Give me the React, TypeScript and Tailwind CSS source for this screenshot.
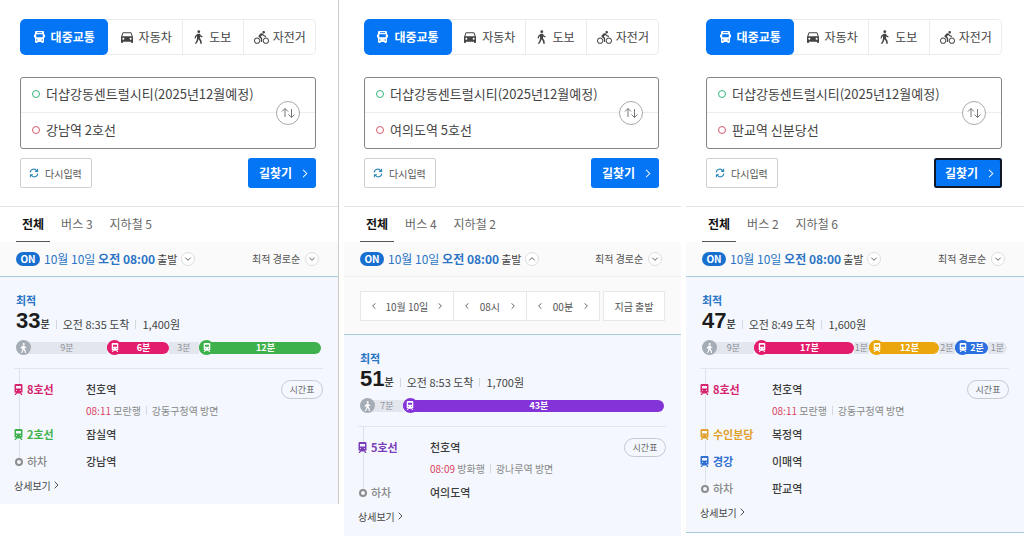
import React, { useState } from "react";
import clsx from "clsx";
import { MdDirectionsBike, MdDirectionsCar } from "react-icons/md";

type Segment = { minutes: string; size: number; color?: string; icon?: "walk" | "train" };
type Step = { line: string; color: string; station: string; time?: string; bound?: string; toward?: string };
type Route = {
  id: string;
  to: string;
  bus: number;
  subway: number;
  pickerOpen?: boolean;
  focused?: boolean;
  total: string;
  arrival: string;
  fare: string;
  segments: Segment[];
  steps: Step[];
  exit: string;
  className: string;
  resultClassName: string;
};

const FROM = "더샵강동센트럴시티(2025년12월예정)";

const PINK = "#e31c6e";
const GREEN = "#3fb14c";
const PURPLE = "#8433d9";
const YELLOW = "#eaa60c";
const BLUE = "#2b6fe0";

const routes: Route[] = [
  {
    id: "gangnam",
    to: "강남역 2호선",
    bus: 3,
    subway: 5,
    total: "33",
    arrival: "오전 8:35 도착",
    fare: "1,400원",
    segments: [
      { minutes: "9분", size: 91, icon: "walk" },
      { minutes: "6분", size: 62, icon: "train", color: PINK },
      { minutes: "3분", size: 30 },
      { minutes: "12분", size: 122, icon: "train", color: GREEN },
    ],
    steps: [
      { line: "8호선", color: "#d6246e", station: "천호역", time: "08:11", bound: "모란행", toward: "강동구청역 방면" },
      { line: "2호선", color: GREEN, station: "잠실역" },
    ],
    exit: "강남역",
    className: "self-start border-r border-[#cfccc6]",
    resultClassName: "pb-[9px]",
  },
  {
    id: "yeouido",
    to: "여의도역 5호선",
    bus: 4,
    subway: 2,
    pickerOpen: true,
    total: "51",
    arrival: "오전 8:53 도착",
    fare: "1,700원",
    segments: [
      { minutes: "7분", size: 43, icon: "walk" },
      { minutes: "43분", size: 263, icon: "train", color: PURPLE },
    ],
    steps: [{ line: "5호선", color: "#7b3cb8", station: "천호역", time: "08:09", bound: "방화행", toward: "광나루역 방면" }],
    exit: "여의도역",
    className: "",
    resultClassName: "grow pb-[9px]",
  },
  {
    id: "pangyo",
    to: "판교역 신분당선",
    bus: 2,
    subway: 6,
    focused: true,
    total: "47",
    arrival: "오전 8:49 도착",
    fare: "1,600원",
    segments: [
      { minutes: "9분", size: 52, icon: "walk" },
      { minutes: "17분", size: 100, icon: "train", color: PINK },
      { minutes: "1분", size: 15 },
      { minutes: "12분", size: 70, icon: "train", color: YELLOW },
      { minutes: "2분", size: 16 },
      { minutes: "2분", size: 33, icon: "train", color: BLUE },
      { minutes: "1분", size: 19 },
    ],
    steps: [
      { line: "8호선", color: "#d6246e", station: "천호역", time: "08:11", bound: "모란행", toward: "강동구청역 방면" },
      { line: "수인분당", color: "#e2a02c", station: "복정역" },
      { line: "경강", color: "#2f6fd0", station: "이매역" },
    ],
    exit: "판교역",
    className: "self-start",
    resultClassName: "border-b pb-[10px]",
  },
];

function BusIcon() {
  return (
    <svg viewBox="0 0 22 24" className="h-3 w-[11px]" fill="currentColor" aria-hidden="true">
      <path
        fillRule="evenodd"
        d="M4 0h14a2 2 0 0 1 2 2v5h2v6h-2v9h-1v2h-4v-2H7v2H3v-2H2v-9H0V7h2V2a2 2 0 0 1 2-2Zm2 2.500V4h10V2.500H6ZM4.500 6.500v6h13v-6h-13ZM4 17v2h3v-2H4Zm11 0v2h3v-2h-3Z"
      />
    </svg>
  );
}

function TrainIcon({ className }: { className?: string }) {
  return (
    <svg viewBox="0 0 18 22" className={className} fill="currentColor" aria-hidden="true">
      <path
        fillRule="evenodd"
        d="M3.500 0h11A2.500 2.500 0 0 1 17 2.500V17h-3l3 5h-3l-1.500-3h-7L4 22H1l3-5H1V2.500A2.500 2.500 0 0 1 3.500 0ZM4 4v5h10V4H4ZM4 12.500V14h2v-1.500H4Zm8 0V14h2v-1.500h-2Z"
      />
    </svg>
  );
}

function WalkIcon({ className }: { className?: string }) {
  return (
    <svg viewBox="0 0 16 24" className={className} fill="currentColor" aria-hidden="true">
      <circle cx="8.500" cy="2.500" r="2.500" />
      <path d="M6.500 6h4l1.800 3.200 3 1.600-.9 1.900-3.600-1.700v3.500l2.400 3.700L14 24h-2.700l-.9-4.700L8 16l-1.200 4L4 24H1.300l3-5 1-4.500V10.500L3.700 11.500 3 14.500H1l.8-4.300Z" />
    </svg>
  );
}

function Chevron({ dir, className }: { dir: "up" | "down" | "left" | "right"; className?: string }) {
  const paths = {
    up: "M2 8l4-4 4 4",
    down: "M2 4l4 4 4-4",
    left: "M8 2L4 6l4 4",
    right: "M4 1l5 5-5 5",
  };
  return (
    <svg viewBox="0 0 12 12" className={className} fill="none" stroke="currentColor" strokeWidth="1.400" aria-hidden="true">
      <path d={paths[dir]} />
    </svg>
  );
}

function ModeTabs() {
  const item = "flex items-center justify-center gap-1 text-[#444]";
  return (
    <div className="flex h-9 overflow-hidden rounded-[5px] bg-white text-xs shadow-[inset_0_0_0_1px_#ebebeb]">
      <button type="button" className="flex flex-[89] items-center justify-center gap-[6px] rounded-[5px] bg-[#0475f4] font-bold text-white">
        <BusIcon />
        대중교통
      </button>
      <button type="button" className={clsx(item, "flex-[74]")}>
        <MdDirectionsCar className="size-4" />
        자동차
      </button>
      <button type="button" className={clsx(item, "flex-[60] gap-[6px] border-l border-[#ebebeb]")}>
        <WalkIcon className="h-[14px] w-[9px]" />
        도보
      </button>
      <button type="button" className={clsx(item, "flex-[73] border-l border-[#ebebeb]")}>
        <MdDirectionsBike className="size-[15px]" />
        자전거
      </button>
    </div>
  );
}

function SearchForm({ route }: { route: Route }) {
  const row = "flex h-[35px] items-center gap-[6px] pb-[2px] pl-[11px]";
  return (
    <form className="border-b border-[#e4e4e4] pb-[18px] pl-5 pr-[22px] pt-[19px]" onSubmit={(e) => e.preventDefault()}>
      <ModeTabs />

      <div className="relative mt-[22px] rounded-[3px] border border-[#858585] text-[13px] text-[#444]">
        <div className={clsx(row, "border-b border-[#ececec]")}>
          <span className="size-2 shrink-0 rounded-full border border-[#2fb67c]" />
          <input aria-label="출발지" defaultValue={FROM} className="min-w-0 grow bg-transparent outline-none" />
        </div>
        <div className={row}>
          <span className="size-2 shrink-0 rounded-full border border-[#d4596c]" />
          <input aria-label="도착지" defaultValue={route.to} className="min-w-0 grow bg-transparent outline-none" />
        </div>
        <button
          type="button"
          aria-label="출발지와 도착지 바꾸기"
          className="absolute right-[15px] top-1/2 flex size-6 -translate-y-1/2 items-center justify-center rounded-full border border-[#a9a9a9] bg-white text-[#777]"
        >
          <svg viewBox="0 0 14 12" className="h-3 w-[14px]" fill="none" stroke="currentColor" aria-hidden="true">
            <path d="M4 10V1.500M1 4.500l3-3 3 3M10.500 2v8.500M7.500 7.500l3 3 3-3" />
          </svg>
        </button>
      </div>

      <div className="mt-[9px] flex justify-between">
        <button type="button" className="flex h-[30px] items-center gap-[6px] rounded-[2px] border border-[#cfcfcf] pl-2 pr-[9px] text-[10px] text-[#555]">
          <svg viewBox="0 0 12 12" className="size-[10px]" fill="none" stroke="#2d86b8" strokeWidth="1.300" aria-hidden="true">
            <path d="M1.500 5.500A4.300 4.300 0 0 1 9.500 3.500M10.500 6.500A4.300 4.300 0 0 1 2.500 8.500M10.300 1v3H7.300M1.700 11V8h3" />
          </svg>
          다시입력
        </button>
        <button
          type="submit"
          className={clsx(
            "flex h-[30px] items-center gap-2 rounded-[3px] bg-[#0475f4] pl-[11px] pr-[7px] text-xs font-bold text-white",
            route.focused && "shadow-[inset_0_0_0_2px_#101828]",
          )}
        >
          길찾기
          <Chevron dir="right" className="size-[9px]" />
        </button>
      </div>
    </form>
  );
}

function RoundChevron({ dir, className }: { dir: "up" | "down"; className?: string }) {
  return (
    <span className={clsx("flex size-[14px] items-center justify-center rounded-full border border-[#dedede] bg-white text-[#555]", className)}>
      <Chevron dir={dir} className="size-2" />
    </span>
  );
}

function Stepper({ label, className }: { label: string; className?: string }) {
  return (
    <div className={clsx("flex items-center justify-between px-[9px]", className)}>
      <button type="button" aria-label={`${label} 이전`}>
        <Chevron dir="left" className="size-2" />
      </button>
      {label}
      <button type="button" aria-label={`${label} 다음`}>
        <Chevron dir="left" className="size-2 rotate-180" />
      </button>
    </div>
  );
}

function TimePicker() {
  return (
    <div className="flex gap-[3px] border-t border-[#f0f0f0] bg-[#fafafa] px-4 pb-[13px] pt-[14px] text-[10px] text-[#555]">
      <div className="grid h-[30px] flex-[242] grid-cols-[93fr_74fr_74fr] border border-[#e8e8e8] bg-white">
        <Stepper label="10월 10일" />
        <Stepper label="08시" className="border-l border-[#e8e8e8]" />
        <Stepper label="00분" className="border-l border-[#e8e8e8]" />
      </div>
      <button type="button" className="h-[30px] flex-[61] border border-[#e8e8e8] bg-white">
        지금 출발
      </button>
    </div>
  );
}

function SegmentBar({ segments }: { segments: Segment[] }) {
  return (
    <div className="mt-[7px] flex h-[15px] items-center">
      {segments.map((s, i) => (
        <div
          key={i}
          className={clsx(
            "flex h-3 min-w-0 basis-0 items-center text-[9px] leading-3",
            s.color ? "z-10 rounded-full font-bold text-white" : "bg-[#e3e6ed] text-[#8a8f98]",
            i === 0 && "rounded-l-full",
            i === segments.length - 1 && "rounded-r-full",
          )}
          style={{ flexGrow: s.size, backgroundColor: s.color }}
        >
          {s.icon && (
            <span
              className={clsx("flex size-[15px] shrink-0 items-center justify-center rounded-full text-white", !s.color && "bg-[#a4acb5]")}
              style={{ backgroundColor: s.color }}
            >
              {s.icon === "walk" ? <WalkIcon className="h-[10px] w-[7px]" /> : <TrainIcon className="h-[9px] w-2" />}
            </span>
          )}
          <span className={clsx("flex min-w-0 grow justify-center whitespace-nowrap", s.icon && "pr-1")}>{s.minutes}</span>
        </div>
      ))}
    </div>
  );
}

function Bar() {
  return <span className="h-[9px] w-px bg-[#d3d8df]" />;
}

function RouteResult({ route }: { route: Route }) {
  return (
    <section className={clsx("border-t border-[#a6cbdf] bg-[#f4f8fe] pt-[15px]", route.resultClassName)}>
      <div className="pl-4 pr-[17px]">
        <p className="text-[11px] font-bold leading-4 text-[#2a74c4]">최적</p>
        <div className="flex h-[25px] items-center text-[11px] text-[#444]">
          <strong className="font-['Liberation_Sans',sans-serif] text-[22px] leading-[25px] text-[#1c1c1c]">{route.total}</strong>
          <span className="mt-[7px] flex items-center gap-[6px] leading-4">
            <span className="text-[10px] font-bold text-[#444]">분</span>
            <Bar />
            {route.arrival}
            <Bar />
            {route.fare}
          </span>
        </div>
        <SegmentBar segments={route.segments} />
      </div>

      <div className="ml-[14px] mr-[15px] mt-[13px] border-t border-[#dfe6ef] text-[11px] text-[#3c3c3c]">
        <ol className="relative pt-[10px] before:absolute before:bottom-[14px] before:left-[5px] before:top-0 before:w-px before:bg-[#dbe2ea]">
          {route.steps.map((s) => (
            <li key={s.line}>
              <div className={clsx("flex items-center", s.time ? "h-[21px]" : "h-[27px]")}>
                <div className="relative flex w-[72px] items-center gap-1 font-bold" style={{ color: s.color }}>
                  <TrainIcon className="h-[11px] w-[9px] bg-[#f4f8fe]" />
                  <span className="whitespace-nowrap">{s.line}</span>
                </div>
                <span className="grow font-medium">{s.station}</span>
                {s.time && (
                  <button type="button" className="h-[19px] w-[42px] rounded-full border border-[#c6cad0] text-[9px] text-[#666]">
                    시간표
                  </button>
                )}
              </div>
              {s.time && (
                <div className="mb-px flex h-5 items-center gap-[5px] pl-[72px] text-[10px] text-[#888]">
                  <span>
                    <span className="text-[#dc3f62]">{s.time}</span> {s.bound}
                  </span>
                  <Bar />
                  {s.toward}
                </div>
              )}
            </li>
          ))}
          <li className="flex h-[27px] items-center font-medium">
            <div className="relative flex w-[72px] items-center gap-1 text-[#888]">
              <span className="ml-px size-2 rounded-full border-2 border-[#8d8d8d] bg-[#f4f8fe]" />
              하차
            </div>
            {route.exit}
          </li>
        </ol>
        <a href={`#${route.id}`} className="flex h-5 items-center gap-px text-[10px] text-[#444]">
          상세보기
          <Chevron dir="right" className="size-2" />
        </a>
      </div>
    </section>
  );
}

function RoutePanel({ route }: { route: Route }) {
  const [open, setOpen] = useState(Boolean(route.pickerOpen));

  return (
    <article className={clsx("flex min-w-0 flex-col", route.className)}>
      <SearchForm route={route} />

      <nav className="flex h-[35px] gap-[5px] pl-4 text-xs text-[#666]">
        <button type="button" className="border-b border-[#555] px-[6px] font-bold text-[#111]">
          전체
        </button>
        <button type="button" className="border-b border-transparent px-[6px]">버스 {route.bus}</button>
        <button type="button" className="border-b border-transparent px-[6px]">지하철 {route.subway}</button>
      </nav>

      <div className="flex h-[34px] items-center justify-between bg-[#fafafa] pl-4 pr-[19px]">
        <button type="button" onClick={() => setOpen(!open)} className="flex items-center text-xs text-[#444]">
          <span className="mr-1 flex h-[14px] w-6 items-center justify-center rounded-full bg-[#176fd0] text-[10px] font-bold text-white">ON</span>
          <span className="mr-[2px] text-[#2b74c6]">
            10월 10일 <b>오전 08:00</b>
          </span>
          <span className="text-[11px]">출발</span>
          <RoundChevron dir={open ? "up" : "down"} className="ml-1" />
        </button>
        <div className="relative flex items-center">
          <select aria-label="정렬" className="appearance-none bg-transparent pr-[18px] text-[10px] leading-4 text-[#555] outline-none">
            <option>최적 경로순</option>
          </select>
          <RoundChevron dir="down" className="pointer-events-none absolute right-0" />
        </div>
      </div>

      {open && <TimePicker />}
      <RouteResult route={route} />
    </article>
  );
}

export default function App() {
  return (
    <main className="grid min-h-screen grid-cols-[339fr_337fr_338fr] gap-[5px] bg-white font-['Noto_Sans_CJK_KR',sans-serif]">
      {routes.map((route) => (
        <RoutePanel key={route.id} route={route} />
      ))}
    </main>
  );
}
